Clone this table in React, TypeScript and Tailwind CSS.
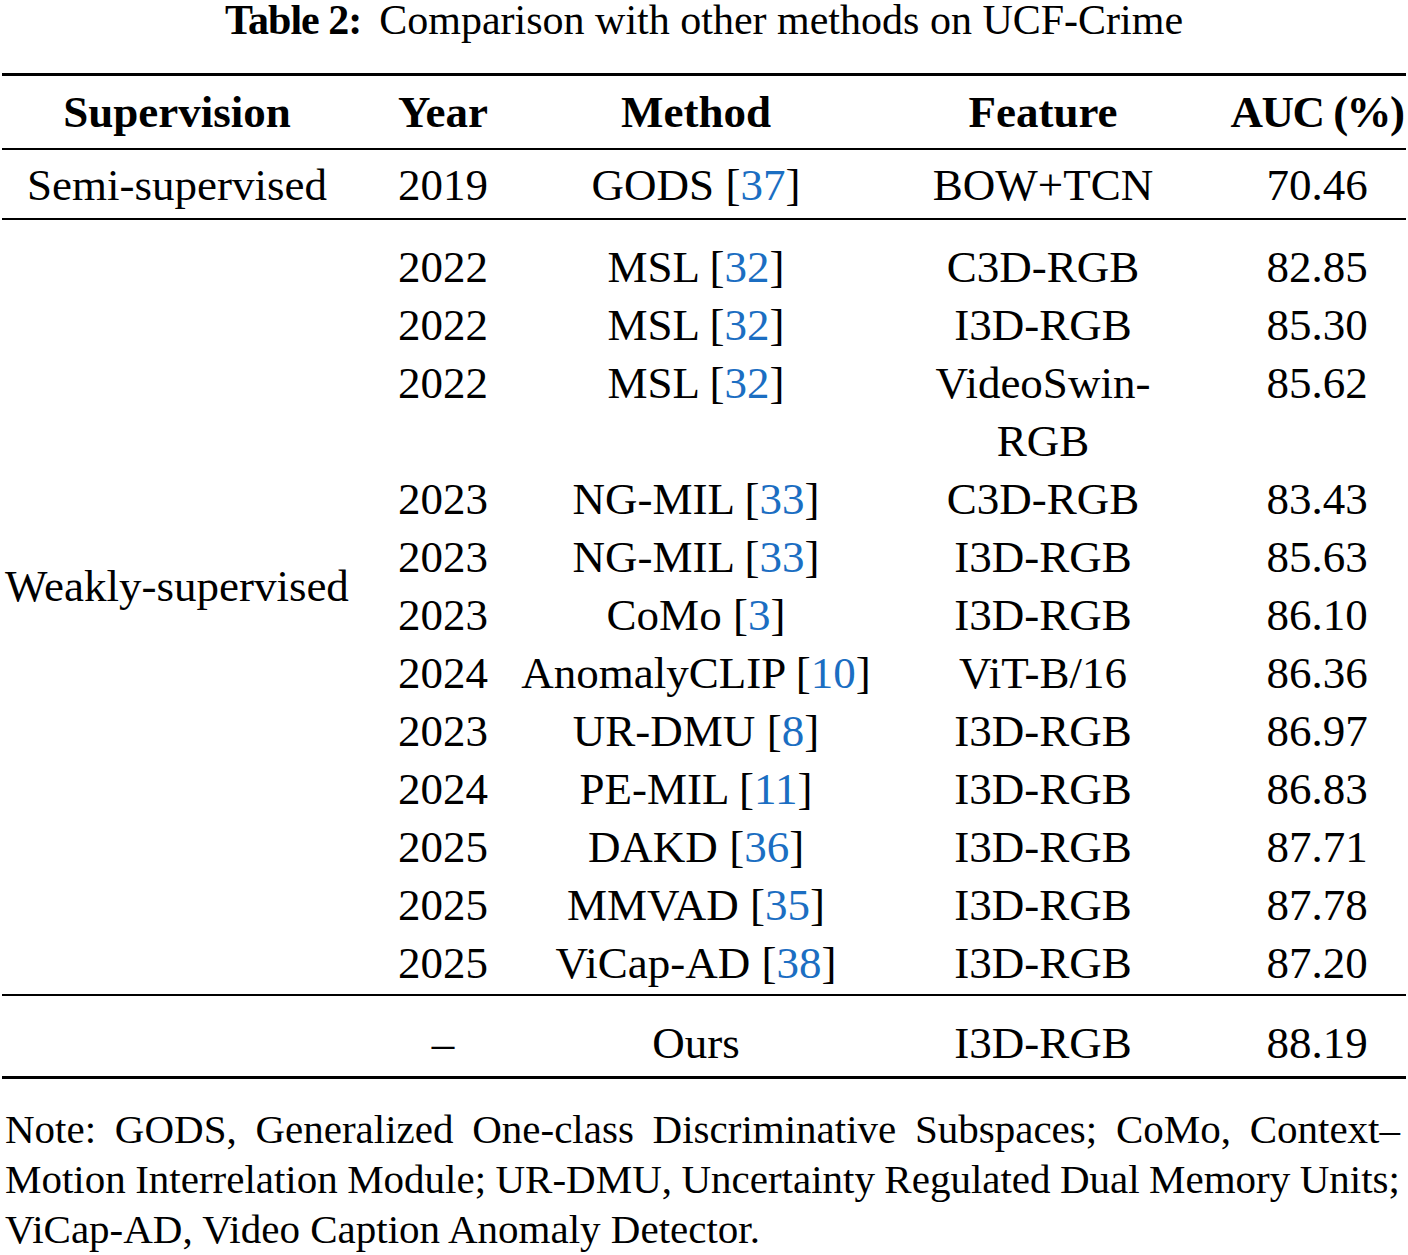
import React from "react";

const LINK = "text-[#1b6ec2]";
const COLS = "grid grid-cols-[350px_182px_324px_370px_178px]";

function Ref({ n }: { n: string }) {
  return (
    <>
      {" "}[<span className={LINK}>{n}</span>]
    </>
  );
}

type Row = { year: string; method: string; ref: string; feature: React.ReactNode; auc: string };

const weak: Row[] = [
  { year: "2022", method: "MSL", ref: "32", feature: "C3D-RGB", auc: "82.85" },
  { year: "2022", method: "MSL", ref: "32", feature: "I3D-RGB", auc: "85.30" },
  {
    year: "2022",
    method: "MSL",
    ref: "32",
    feature: (
      <>
        VideoSwin-
        <br />
        RGB
      </>
    ),
    auc: "85.62",
  },
  { year: "2023", method: "NG-MIL", ref: "33", feature: "C3D-RGB", auc: "83.43" },
  { year: "2023", method: "NG-MIL", ref: "33", feature: "I3D-RGB", auc: "85.63" },
  { year: "2023", method: "CoMo", ref: "3", feature: "I3D-RGB", auc: "86.10" },
  { year: "2024", method: "AnomalyCLIP", ref: "10", feature: "ViT-B/16", auc: "86.36" },
  { year: "2023", method: "UR-DMU", ref: "8", feature: "I3D-RGB", auc: "86.97" },
  { year: "2024", method: "PE-MIL", ref: "11", feature: "I3D-RGB", auc: "86.83" },
  { year: "2025", method: "DAKD", ref: "36", feature: "I3D-RGB", auc: "87.71" },
  { year: "2025", method: "MMVAD", ref: "35", feature: "I3D-RGB", auc: "87.78" },
  { year: "2025", method: "ViCap-AD", ref: "38", feature: "I3D-RGB", auc: "87.20" },
];

function Cell({ children, className = "" }: { children?: React.ReactNode; className?: string }) {
  return (
    <div className={`flex justify-center text-center whitespace-nowrap ${className}`}>
      <div>{children}</div>
    </div>
  );
}

export default function App() {
  return (
    <div
      className="w-[1408px] h-[1255px] bg-white text-black"
      style={{ fontFamily: '"Liberation Serif", "Times New Roman", serif' }}
    >
      {/* Title */}
      <div className="h-[73px] flex justify-center">
        <div className="text-[42px] leading-[40px] whitespace-nowrap">
          <span className="font-bold tracking-[-1px]">Table 2:</span>
          <span className="ml-[18px]">Comparison with other methods on UCF-Crime</span>
        </div>
      </div>

      <div className="px-[2px] text-[45px]">
        <div className="h-[3px] bg-black" />
        {/* Header */}
        <div className={`${COLS} h-[72px] items-center font-bold leading-[58px]`}>
          <Cell>Supervision</Cell>
          <Cell>Year</Cell>
          <Cell>Method</Cell>
          <Cell>Feature</Cell>
          <Cell className="tracking-[-1.5px]">AUC (%)</Cell>
        </div>
        <div className="h-[2px] bg-black" />
        {/* Semi-supervised */}
        <div className={`${COLS} h-[68px] pt-[6px] pb-[4px] leading-[58px]`}>
          <Cell>Semi-supervised</Cell>
          <Cell>2019</Cell>
          <Cell>
            GODS
            <Ref n="37" />
          </Cell>
          <Cell>BOW+TCN</Cell>
          <Cell>70.46</Cell>
        </div>
        <div className="h-[2px] bg-black" />
        {/* Weakly-supervised */}
        <div className={`${COLS} pt-[18px] pb-[2px] leading-[58px]`}>
          <Cell className="items-center [grid-row:1/span_11] [grid-column:1]">Weakly-supervised</Cell>
          {weak.map((r, i) => (
            <React.Fragment key={i}>
              <Cell className="[grid-column:2]">{r.year}</Cell>
              <Cell className="[grid-column:3]">
                {r.method}
                <Ref n={r.ref} />
              </Cell>
              <Cell className="[grid-column:4]">{r.feature}</Cell>
              <Cell className="[grid-column:5]">{r.auc}</Cell>
            </React.Fragment>
          ))}
        </div>
        <div className="h-[2px] bg-black" />
        {/* Ours */}
        <div className={`${COLS} pt-[18px] pb-[4px] leading-[58px]`}>
          <Cell />
          <Cell>–</Cell>
          <Cell>Ours</Cell>
          <Cell>I3D-RGB</Cell>
          <Cell>88.19</Cell>
        </div>
        <div className="h-[3px] bg-black" />
      </div>

      {/* Note */}
      <div className="pl-[5px] pr-[8px] pt-[25px] text-[41px] leading-[50px]">
        <div className="whitespace-nowrap flex justify-between">
          {"Note: GODS, Generalized One-class Discriminative Subspaces; CoMo, Context–"
            .split(" ")
            .map((w, i) => (
              <span key={i}>{w}</span>
            ))}
        </div>
        <div className="whitespace-nowrap flex justify-between">
          {"Motion Interrelation Module; UR-DMU, Uncertainty Regulated Dual Memory Units;"
            .split(" ")
            .map((w, i) => (
              <span key={i}>{w}</span>
            ))}
        </div>
        <div className="whitespace-nowrap">ViCap-AD, Video Caption Anomaly Detector.</div>
      </div>
    </div>
  );
}
